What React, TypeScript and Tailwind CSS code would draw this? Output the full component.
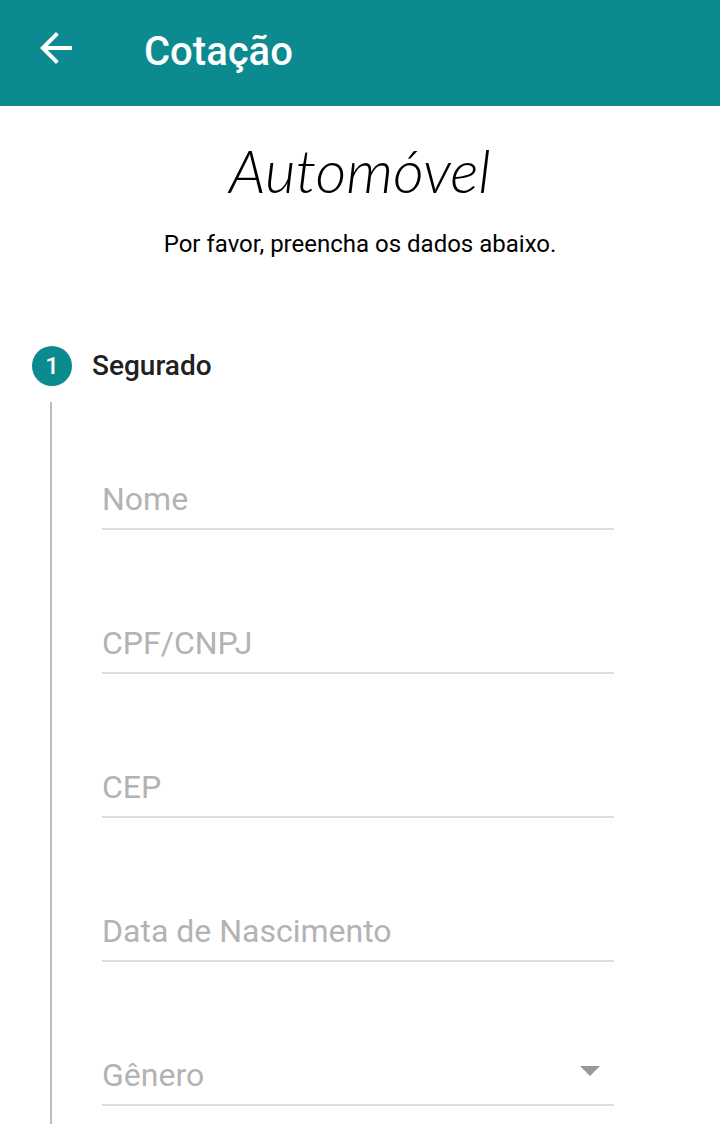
import { useState } from 'react';
import { MdArrowBack } from 'react-icons/md';

const textFields = [
  { id: 'nome', label: 'Nome', mode: 'text' },
  { id: 'documento', label: 'CPF/CNPJ', mode: 'numeric' },
  { id: 'cep', label: 'CEP', mode: 'numeric' },
  { id: 'nascimento', label: 'Data de Nascimento', mode: 'numeric' },
] as const;

const labelClass = 'pointer-events-none col-start-1 row-start-1 self-center pt-0.5 text-[32px] leading-10 text-[#b3b3b3]';
const controlClass =
  'col-start-1 row-start-1 h-16 w-full appearance-none border-b-2 border-[#dedede] bg-transparent text-[32px] text-[#212121] outline-none focus:border-[#0b8a8f]';

export default function Cotacao() {
  const [values, setValues] = useState<Record<string, string>>({});

  const update = (id: string, value: string) => setValues({ ...values, [id]: value });

  return (
    <div className="flex min-h-screen flex-col bg-white font-['Roboto',sans-serif] text-black">
      <header className="flex h-[106px] items-start gap-16 bg-[#0b8a8f] px-8 pt-6 text-white">
        <button type="button" aria-label="Voltar">
          <MdArrowBack className="size-12" />
        </button>
        <h1 className="text-[40px] leading-14 font-medium">Cotação</h1>
      </header>

      <section className="pt-7 text-center">
        <h2 className="font-['Lato',cursive] text-[60px] leading-18 font-light italic">Automóvel</h2>
        <p className="mt-5 text-2xl leading-9">Por favor, preencha os dados abaixo.</p>
      </section>

      <main className="flex flex-1 flex-col pt-21 pl-8">
        <div className="flex items-center gap-5">
          <span className="flex size-10 items-center justify-center rounded-full bg-[#0b8a8f] text-2xl font-medium text-white">
            1
          </span>
          <h3 className="text-[28px] leading-10 font-medium text-[#212121]">Segurado</h3>
        </div>

        <form className="mt-4 ml-[18px] flex flex-1 flex-col gap-20 border-l-2 border-[#bdbdbd] pt-16 pr-[106px] pb-4 pl-[50px]">
          {textFields.map((field) => (
            <div key={field.id} className="grid">
              <label htmlFor={field.id} className={`${labelClass} ${values[field.id] ? 'invisible' : ''}`}>
                {field.label}
              </label>
              <input
                id={field.id}
                type="text"
                inputMode={field.mode}
                value={values[field.id] ?? ''}
                onChange={(e) => update(field.id, e.target.value)}
                className={controlClass}
              />
            </div>
          ))}

          <div className="grid">
            <label htmlFor="genero" className={`${labelClass} ${values.genero ? 'invisible' : ''}`}>
              Gênero
            </label>
            <select
              id="genero"
              value={values.genero ?? ''}
              onChange={(e) => update('genero', e.target.value)}
              className={controlClass}
            >
              <option value=""></option>
              <option value="F">Feminino</option>
              <option value="M">Masculino</option>
            </select>
            <svg
              viewBox="0 0 20 10"
              aria-hidden="true"
              className="pointer-events-none col-start-1 row-start-1 mr-3.5 mb-1.5 h-2.5 w-5 self-center justify-self-end fill-[#999999]"
            >
              <path d="M0 0h20L10 10z" />
            </svg>
          </div>
        </form>
      </main>
    </div>
  );
}
